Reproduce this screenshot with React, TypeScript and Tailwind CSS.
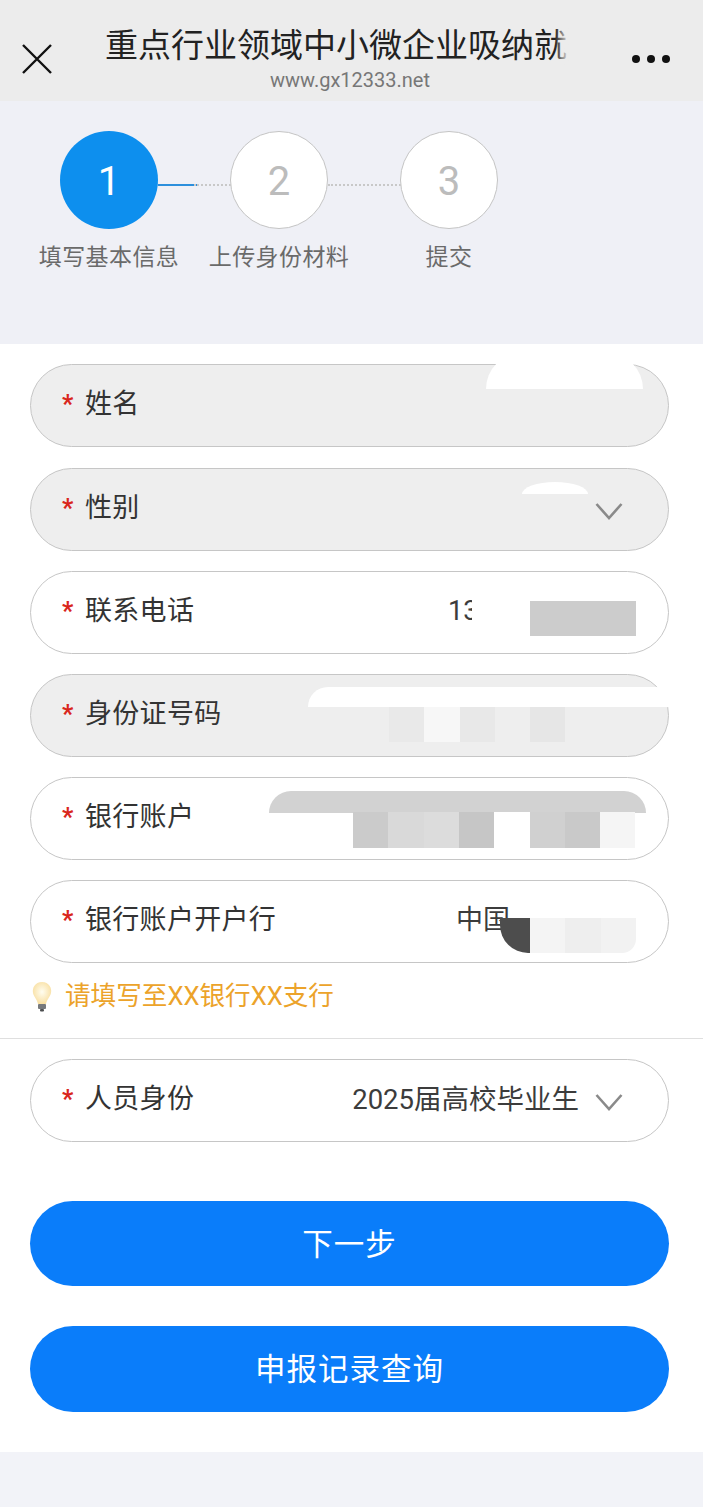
import type { ReactNode } from "react";

const font = "font-['Roboto','Noto_Sans_CJK_SC',sans-serif]";

function Chevron() {
  return (
    <svg width="30" height="20" viewBox="0 0 30 20" fill="none" className="shrink-0">
      <path d="M2.5 3 L15 17 L27.5 3" stroke="#8a8a8a" strokeWidth="2.6" />
    </svg>
  );
}

function Bulb() {
  return (
    <svg width="24" height="32" viewBox="0 0 24 32" className="shrink-0">
      <defs>
        <radialGradient id="glow" cx="50%" cy="45%" r="60%">
          <stop offset="0%" stopColor="#fffdf0" />
          <stop offset="100%" stopColor="#f8dd9c" />
        </radialGradient>
      </defs>
      <path d="M12 1 C5 1 2 7 3 12 C4 16 7 18 8 23 L16 23 C17 18 20 16 21 12 C22 7 19 1 12 1 Z" fill="url(#glow)" />
      <rect x="8" y="23" width="8" height="5" rx="1" fill="#77797c" />
      <rect x="10" y="28" width="4" height="2.5" rx="1" fill="#4c4e50" />
    </svg>
  );
}

interface FieldProps {
  label: string;
  gray?: boolean;
  value?: string;
  valueClass?: string;
  chevron?: boolean;
  className?: string;
  children?: ReactNode;
}

function Field({ label, gray, value, valueClass, chevron, className, children }: FieldProps) {
  return (
    <div
      className={`relative h-[83px] rounded-[42px] border border-[#c6c6c6] flex items-center pl-[31px] pr-[45px] pb-[1px] ${
        gray ? "bg-[#eeeeee]" : "bg-white"
      } ${className ?? ""}`}
    >
      <span className="w-[23px] text-[25px] font-bold leading-none text-[#d9261c] -translate-y-[1px]">*</span>
      <span className="text-[27px] text-[#333333] tracking-[0.3px] -translate-y-[1px]">{label}</span>
      {value && <span className={`ml-auto text-[27.5px] text-[#3c3c3c] ${valueClass ?? ""}`}>{value}</span>}
      {chevron && (
        <span className="absolute right-[44px] top-[32px]">
          <Chevron />
        </span>
      )}
      {children}
    </div>
  );
}

function Step({ n, label, active }: { n: number; label: string; active?: boolean }) {
  return (
    <div className="w-[170px] flex flex-col items-center shrink-0">
      <div
        className={`relative z-10 size-[98px] rounded-full flex items-center justify-center pt-[3px] text-[40px] ${
          active ? "bg-[#0d8fee] text-white" : "bg-white border border-[#c4c4c4] text-[#bcbcbc]"
        }`}
      >
        {n}
      </div>
      <span className="mt-[13px] text-[23px] leading-[32px] text-[#6a6a6a] tracking-[0.4px]">{label}</span>
    </div>
  );
}

export default function App() {
  return (
    <div className={`w-[703px] h-[1507px] overflow-hidden bg-[#f2f3f8] ${font}`}>
      {/* 顶部标题栏 */}
      <div className="relative h-[101px] bg-[#ececec] flex flex-col items-center pt-[25px]">
        <svg width="32" height="32" viewBox="0 0 32 32" className="absolute left-[21px] top-[43px]">
          <path d="M2 2 L30 30 M30 2 L2 30" stroke="#111111" strokeWidth="2.4" />
        </svg>
        <div className="relative self-start ml-[105px] w-[464px] text-[33px] leading-[42px] text-[#222222] whitespace-nowrap">
          重点行业领域中小微企业吸纳就
          <span className="absolute right-0 top-0 h-full w-[14px] bg-gradient-to-r from-transparent to-[#ececec]" />
        </div>
        <div className="-ml-[3px] text-[20px] leading-[26px] text-[#777777]">www.gx12333.net</div>
        <div className="absolute left-[632px] top-[55px] flex gap-[7px]">
          <span className="size-[8px] rounded-full bg-[#111111]" />
          <span className="size-[8px] rounded-full bg-[#111111]" />
          <span className="size-[8px] rounded-full bg-[#111111]" />
        </div>
      </div>

      {/* 步骤条 */}
      <div className="h-[243px] bg-[#eff0f6] pt-[30px] pl-[24px]">
        <div className="relative flex">
          <Step n={1} label="填写基本信息" active />
          <Step n={2} label="上传身份材料" />
          <Step n={3} label="提交" />
          <div className="absolute left-[134px] top-[53px] w-[40px] h-[2px] bg-[#2d8fdc]" />
          <div className="absolute left-[170px] top-[53px] w-[40px] border-t-2 border-dotted border-[#c8c8c8]" />
          <div className="absolute left-[304px] top-[53px] w-[76px] border-t-2 border-dotted border-[#c8c8c8]" />
        </div>
      </div>

      {/* 表单 */}
      <div className="h-[1108px] bg-white pt-[20px]">
        <div className="pl-[30px] pr-[34px] flex flex-col gap-[20px]">
          <Field label="姓名" gray className="mb-[1px]">
            <div className="absolute left-[455px] -top-[12px] w-[157px] h-[36px] bg-white rounded-t-[50px]" />
          </Field>
          <Field label="性别" gray chevron>
            <div className="absolute left-[491px] top-[13px] w-[66px] h-[12px] bg-white rounded-[50%_50%_0_0/100%_100%_0_0]" />
          </Field>
          <Field label="联系电话">
            <span className="absolute left-[417px] top-[21px] text-[27px] leading-[36px] text-[#3c3c3c]">13</span>
            <div className="absolute left-[441px] top-[20px] w-[24px] h-[40px] bg-white" />
            <div className="absolute left-[499px] top-[29px] w-[106px] h-[35px] bg-[#cccccc]" />
          </Field>
          <Field label="身份证号码" gray>
            <div className="absolute left-[277px] top-[12px] w-[362px] h-[20px] bg-white rounded-tl-[30px] rounded-tr-[20px]" />
            <div className="absolute left-[358px] top-[32px] flex h-[35px]">
              <div className="w-[35px] bg-[#e9e9e9]" />
              <div className="w-[36px] bg-[#f7f7f7]" />
              <div className="w-[35px] bg-[#e8e8e8]" />
              <div className="w-[35px] bg-[#eeeeee]" />
              <div className="w-[35px] bg-[#e6e6e6]" />
            </div>
          </Field>
          <Field label="银行账户">
            <div className="absolute left-[238px] top-[13px] w-[377px] h-[22px] bg-[#d2d2d2] rounded-t-[24px]" />
            <div className="absolute left-[322px] top-[34px] flex h-[36px]">
              <div className="w-[35px] bg-[#cbcbcb]" />
              <div className="w-[36px] bg-[#d9d9d9]" />
              <div className="w-[35px] bg-[#dcdcdc]" />
              <div className="w-[35px] bg-[#c6c6c6]" />
              <div className="w-[36px] bg-white" />
              <div className="w-[35px] bg-[#d0d0d0]" />
              <div className="w-[35px] bg-[#c9c9c9]" />
              <div className="w-[35px] bg-[#f5f5f5]" />
            </div>
          </Field>
          <Field label="银行账户开户行">
            <span className="absolute left-[425px] top-[20px] whitespace-nowrap text-[27px] leading-[38px] text-[#3c3c3c]">中国</span>
            <div className="absolute left-[469px] top-[37px] w-[30px] h-[35px] bg-[#4d4d4d] rounded-bl-[28px]" />
            <div className="absolute left-[499px] top-[37px] flex h-[35px] rounded-br-[14px] overflow-hidden">
              <div className="w-[35px] bg-[#f4f4f4]" />
              <div className="w-[36px] bg-[#eeeeee]" />
              <div className="w-[35px] bg-[#f2f2f2]" />
            </div>
          </Field>
        </div>

        <div className="h-[76px] pl-[30px] pb-[8px] flex items-center gap-[11px] border-b border-[#dfdfdf]">
          <Bulb />
          <span className="text-[25.6px] text-[#eca32a]">请填写至XX银行XX支行</span>
        </div>

        <div className="pl-[30px] pr-[34px] pt-[20px]">
          <Field label="人员身份" value="2025届高校毕业生" valueClass="mr-[44px]" chevron />
        </div>

        <div className="pl-[30px] pr-[34px] pt-[59px] flex flex-col gap-[40px]">
          <button className="h-[85px] pt-[2px] rounded-[43px] bg-[#0a7dfa] text-white text-[30.5px] tracking-[1px]">下一步</button>
          <button className="h-[86px] pt-[2px] rounded-[43px] bg-[#0a7dfa] text-white text-[30.5px] tracking-[1px]">申报记录查询</button>
        </div>
      </div>
    </div>
  );
}
